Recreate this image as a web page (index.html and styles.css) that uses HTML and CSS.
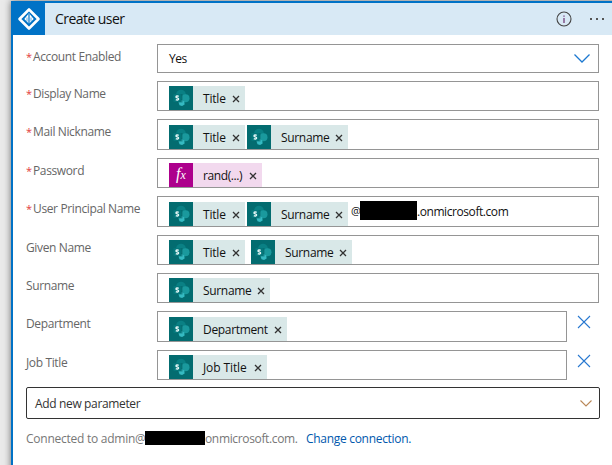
FILE: index.html
```html
<!DOCTYPE html>
<html lang="en">
<head>
<meta charset="utf-8">
<title>Create user</title>
<link rel="stylesheet" href="styles.css">
</head>
<body>
<svg class="defs" width="0" height="0" aria-hidden="true">
  <symbol id="sp" viewBox="0 0 24 24">
    <circle cx="12" cy="8.600" r="4.900" fill="#0a8084"/>
    <circle cx="16.500" cy="12.200" r="4" fill="#1a999d"/>
    <path d="M9.300 15.500l3.500-1.500 2.500 1.500.3 3-2.500 1.500-2.600-.8z" fill="#35bac2"/>
    <path d="M8 8h5.500v8.500H8z" fill="#02595c" opacity=".5"/>
    <rect x="4.300" y="8" width="8" height="8" rx=".8" fill="#04777b"/>
    <path d="M9.700 10.300C8.600 9.700 7 9.900 7 10.900c0 1.100 2.600.9 2.600 2.100 0 1.100-1.700 1.200-2.800.6" fill="none" stroke="#e5f6f6" stroke-width="1.400"/>
  </symbol>
  <symbol id="x" viewBox="0 0 8 8"><path d="M1 1l6 6M7 1L1 7" fill="none" stroke="currentColor" stroke-width="1.300"/></symbol>
  <symbol id="bigx" viewBox="0 0 14 14"><path d="M1 1l12 12M13 1L1 13" fill="none" stroke="#2878d0" stroke-width="1.100"/></symbol>
</svg>
<main class="card">
  <header class="head">
    <div class="logo"><svg width="32" height="32" viewBox="0 0 32 32"><path d="M16 6.500L25.500 16 16 25.500 6.500 16z" fill="none" stroke="#fff" stroke-width="2.600" stroke-linejoin="round"/><path d="M16 10.300L11.300 16 16 20.800 20.700 16z" fill="#fff"/><path d="M16 11v10" stroke="#0072c6" stroke-width="1.200"/><path d="M14 14.500v4M18 14.500v4" stroke="#0072c6" stroke-width=".6"/></svg></div>
    <h1>Create user</h1>
    <svg class="info" width="16" height="16" viewBox="0 0 16 16"><circle cx="8" cy="8" r="7" fill="none" stroke="#444" stroke-width="1.100"/><path d="M8 4.500v1.300M8 7v5" stroke="#6b3070" stroke-width="1.200"/></svg>
    <svg class="more" width="16" height="4" viewBox="0 0 16 4"><path d="M1 1h2v2H1zM7 1h2v2H7zM13 1h2v2h-2z" fill="#555"/></svg>
  </header>
  <section class="form">
    <div class="row h29"><label><i>*</i><span>Account Enabled</span></label><div class="field select"><span>Yes</span><svg width="16" height="9" viewBox="0 0 16 9"><path d="M.5.5L8 8 15.500.5" fill="none" stroke="#1c78d0" stroke-width="1.300"/></svg></div></div>
    <div class="row"><label><i>*</i><span>Display Name</span></label><div class="field"><span class="token title"><svg class="ic"><use href="#sp"/></svg><b>Title</b><svg class="x"><use href="#x"/></svg></span></div></div>
    <div class="row h31"><label><i>*</i><span>Mail Nickname</span></label><div class="field"><span class="token title"><svg class="ic"><use href="#sp"/></svg><b>Title</b><svg class="x"><use href="#x"/></svg></span><span class="token surname"><svg class="ic"><use href="#sp"/></svg><b>Surname</b><svg class="x"><use href="#x"/></svg></span></div></div>
    <div class="row"><label><i>*</i><span>Password</span></label><div class="field"><span class="token rand"><span class="fx">f<small>x</small></span><b>rand(...)</b><svg class="x"><use href="#x"/></svg></span></div></div>
    <div class="row h31"><label><i>*</i><span>User Principal Name</span></label><div class="field"><span class="token title"><svg class="ic"><use href="#sp"/></svg><b>Title</b><svg class="x"><use href="#x"/></svg></span><span class="token surname"><svg class="ic"><use href="#sp"/></svg><b>Surname</b><svg class="x"><use href="#x"/></svg></span><span class="domain"><span class="at">@</span><span class="mask"></span><span class="host">.onmicrosoft.com</span></span></div></div>
    <div class="row"><label><span>Given Name</span></label><div class="field spaced"><span class="token title"><svg class="ic"><use href="#sp"/></svg><b>Title</b><svg class="x"><use href="#x"/></svg></span><span class="token surname"><svg class="ic"><use href="#sp"/></svg><b>Surname</b><svg class="x"><use href="#x"/></svg></span></div></div>
    <div class="row"><label><span>Surname</span></label><div class="field"><span class="token surname"><svg class="ic"><use href="#sp"/></svg><b>Surname</b><svg class="x"><use href="#x"/></svg></span></div></div>
    <div class="row h31"><label><span>Department</span></label><div class="field"><span class="token dept"><svg class="ic"><use href="#sp"/></svg><b>Department</b><svg class="x"><use href="#x"/></svg></span></div><svg class="remove"><use href="#bigx"/></svg></div>
    <div class="row"><label><span>Job Title</span></label><div class="field"><span class="token job"><svg class="ic"><use href="#sp"/></svg><b>Job Title</b><svg class="x"><use href="#x"/></svg></span></div><svg class="remove"><use href="#bigx"/></svg></div>
    <div class="add"><span>Add new parameter</span><svg width="12" height="7" viewBox="0 0 12 7"><path d="M.5.5L6 6 11.500.5" fill="none" stroke="#b98757" stroke-width="1.100"/></svg></div>
    <footer><span class="f1">Connected to admin@</span><span class="mask"></span><span class="f2">onmicrosoft.com.</span><a class="f3">Change connection.</a></footer>
  </section>
</main>
</body>
</html>
```

FILE: styles.css
```css
* { box-sizing: border-box; }
body {
  margin: 0;
  padding: 1px 0 0 11px;
  height: 465px;
  overflow: hidden;
  background: #eaeaea;
  font: 12px/16px "Open Sans", "Noto Sans", sans-serif;
  color: #111;
  white-space: nowrap;
}
svg { display: block; flex: none; }
.defs { position: absolute; }
.card {
  width: 620px;
  height: 480px;
  background: #fff;
  border: 2px solid #0072c6;
  box-shadow: 0 0 7px rgba(0, 0, 0, .55);
}
.head {
  width: 599px;
  height: 32px;
  display: flex;
  align-items: center;
  background: #d8e9f5;
}
.logo { width: 32px; height: 32px; background: #0072c6; }
h1 { margin: 0 0 0 10px; font-size: 14px; font-weight: 400; letter-spacing: -.55px; }
.info { margin-left: auto; }
.more { margin: 0 7px 0 17px; }
.form { width: 587px; padding: 9px 0 0 13px; }
.row { height: 30px; margin-bottom: 8px; display: flex; }
.h29 { height: 29px; }
.h31 { height: 31px; }
label { width: 131px; flex: none; display: flex; line-height: 26px; color: #666; letter-spacing: -.37px; }
label i { width: 7px; font-style: normal; font-size: 11px; color: #e23b3b; }
.field {
  flex: 1;
  display: flex;
  align-items: flex-end;
  gap: 2px;
  margin-right: 1px;
  padding-left: 11px;
  border: 1px solid #959595;
}
.remove { width: 14px; height: 14px; margin: 4px 9px 0 9px; }
.spaced { gap: 6px; }
.select { align-items: center; justify-content: space-between; padding-right: 8px; }
.select span { letter-spacing: -.5px; }
.token { height: 24px; display: flex; align-items: center; background: #d9e8e8; }
.token b { margin: 2px 0 0 10px; font-weight: 400; letter-spacing: -.33px; }
.ic { width: 24px; height: 24px; background: #036c70; }
.x { width: 8px; height: 8px; margin: 2px 5px 0 auto; color: #333; }
.title { width: 76px; }
.title b { letter-spacing: -.2px; }
.surname { width: 101px; }
.rand { width: 93px; background: #f2d9ee; }
.rand b { letter-spacing: -.4px; }
.dept { width: 118px; }
.job { width: 98px; }
.job b { letter-spacing: -.1px; }
.fx {
  width: 24px;
  height: 24px;
  background: #ad008c;
  color: #fff;
  text-align: center;
  font: italic 16px/22px "Liberation Serif", serif;
}
.fx small { font-size: 12px; }
.domain { height: 19px; margin: 0 0 6px 1px; display: flex; align-items: center; }
.at { width: 9px; font-size: 11px; letter-spacing: -.3px; }
.mask { background: #000; position: relative; }
.domain .mask { width: 57px; height: 19px; }
.host { margin-top: 2px; letter-spacing: -.43px; }
.add {
  width: 574px;
  height: 32px;
  margin-top: -1px;
  padding: 0 7px 0 8px;
  display: flex;
  align-items: center;
  justify-content: space-between;
  border: 1px solid #333;
  border-radius: 2px;
  color: #333;
}
.add span { margin-top: 2px; letter-spacing: -.35px; }
footer { height: 16px; margin-top: 12px; display: flex; color: #777; }
footer .mask { width: 60px; height: 14px; }
.f1 { width: 119px; letter-spacing: -.25px; }
.f2 { width: 101px; letter-spacing: -.35px; }
.f3 { color: #0058ad; letter-spacing: -.3px; }
```
